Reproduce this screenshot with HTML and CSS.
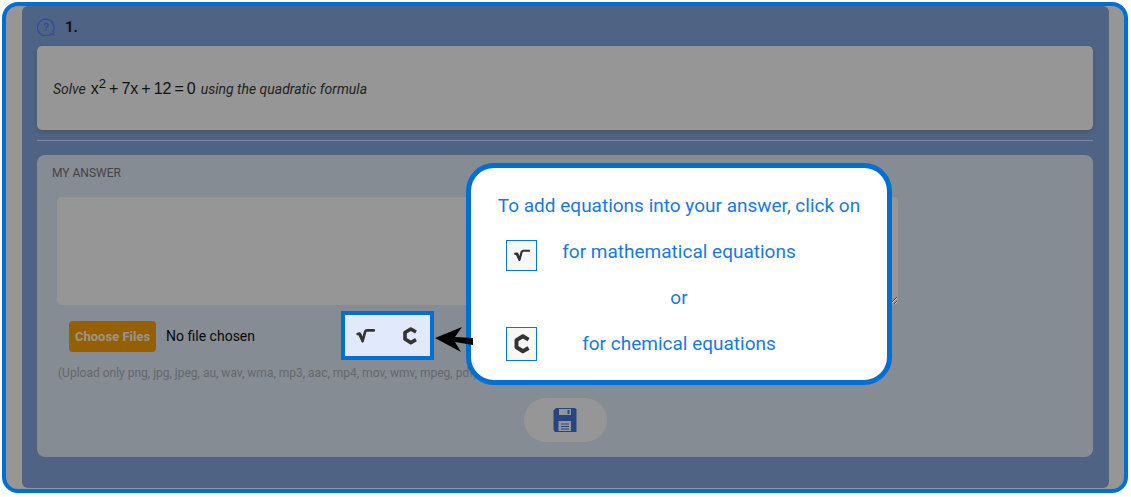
FILE: index.html
```
<!DOCTYPE html>
<html lang="en">
<head>
<meta charset="utf-8">
<title>Question 1</title>
<link rel="stylesheet" href="styles.css">
</head>
<body>
<svg class="symbols" aria-hidden="true">
  <symbol id="root" viewBox="0 0 20 20"><path d="M2.600 8L4.600 7.600L7.600 15L10.200 5.600Q10.700 4.400 12 4.400H19" fill="none" stroke="currentColor" stroke-width="2.600" stroke-linecap="round" stroke-linejoin="round"/><path d="M3.500 8L7.600 16L9.500 9L7.500 12L5.500 7.500Z" fill="currentColor" stroke="currentColor" stroke-width="1.200" stroke-linejoin="round"/></symbol>
  <symbol id="hex" viewBox="0 0 20 20"><path d="M16 6L10.800 3L5 6.500V13L10.800 16.600L16 13.600" fill="none" stroke="currentColor" stroke-width="3.600" stroke-linejoin="round"/></symbol>
</svg>
<main class="frame">
  <section class="panel">
    <header class="question-head">
      <svg class="help" viewBox="0 0 18 18" aria-hidden="true">
        <path d="M14.4 15.6A8.3 8.3 0 1 1 16.2 13.2Q15.8 15 17 17Q15.6 17.2 14.4 15.6Z" fill="none" stroke="currentColor" stroke-width="1.2" stroke-linejoin="round"/>
        <path d="M7.2 7.3A1.9 1.9 0 1 1 9.9 9Q9.1 9.4 9.1 10.3" fill="none" stroke="currentColor" stroke-width="1.4"/>
        <circle cx="9.1" cy="12.2" r=".9" fill="currentColor"/>
      </svg>
      <h1 class="number">1.</h1>
    </header>
    <div class="question">
      <em>Solve</em>
      <span class="equation"><span>x<sup>2</sup></span><span>+</span><span>7x</span><span>+</span><span>12</span><span>=</span><span>0</span></span>
      <em>using the quadratic formula</em>
    </div>
    <hr class="rule">
    <form class="answer">
      <label class="answer-label" for="answer">MY ANSWER</label>
      <textarea class="answer-text" id="answer"></textarea>
      <div class="attach">
        <input class="file" type="file" multiple aria-label="Choose files">
        <div class="tools">
          <button class="tool" type="button" aria-label="Mathematical equation"><svg class="icon"><use href="#root"/></svg></button>
          <button class="tool" type="button" aria-label="Chemical equation"><svg class="icon"><use href="#hex"/></svg></button>
          <div class="tip" role="dialog" aria-label="Adding equations">
            <p class="tip-text">To add equations into your answer, click on</p>
            <div class="tip-row">
              <span class="key"><svg class="icon-small"><use href="#root"/></svg></span>
              <p class="tip-text">for mathematical equations</p>
            </div>
            <p class="tip-text">or</p>
            <div class="tip-row">
              <span class="key key-tall"><svg class="icon-large"><use href="#hex"/></svg></span>
              <p class="tip-text">for chemical equations</p>
            </div>
          </div>
          <svg class="arrow" viewBox="0 0 40 28" aria-hidden="true"><path d="M1 13L28 2L21 12L39 13V20L21 17L27 27Z" fill="#000"/></svg>
        </div>
      </div>
      <p class="hint">(Upload only png, jpg, jpeg, au, wav, wma, mp3, aac, mp4, mov, wmv, mpeg, pdf)</p>
      <button class="save" type="submit" aria-label="Save">
        <svg class="disk" viewBox="0 0 24 26" aria-hidden="true">
          <path d="M3 1H22L23.5 2.5V25H2L.5 23V3.5Z" fill="#264581"/>
          <path d="M6 2H18V8H6ZM5.500 14H18V24H5.500Z" fill="#969696"/>
          <path d="M15.500 3V7" stroke="#264581" stroke-width="2"/>
          <path d="M8 17H16M8 19.500H16M8 22H16" stroke="#264581" stroke-width="1"/>
        </svg>
      </button>
    </form>
  </section>
</main>
</body>
</html>
```
FILE: styles.css
```
* { box-sizing: border-box; }
body { margin: 0; padding: 2px 3px 4px 2px; background: #fff; font-family: Roboto, sans-serif; }
p, h1 { margin: 0; }
.symbols { position: absolute; width: 0; height: 0; }
.frame { padding: 0 15px 1px 16px; border: 4px solid #006fd3; border-radius: 16px; background: #969696; }
.panel { padding: 10px 16px 31px 15px; border-radius: 6px; background: #4f6384; }
.question-head { display: flex; align-items: center; gap: 10px; height: 30px; padding-bottom: 9px; }
.help { width: 18px; height: 18px; color: #2e509c; }
.number { font-size: 15px; line-height: 20px; font-weight: 700; color: #111; }
.question { display: flex; align-items: center; height: 84px; padding: 2px 16px 0; gap: 5px; border-radius: 5px; background: #969696; box-shadow: 0 2px 4px rgba(0, 0, 0, .15); font-size: 14px; color: #222; }
.equation { display: flex; gap: 3px; font: 16px/20px "Liberation Sans", sans-serif; color: #111; }
.equation sup { font-size: 13px; line-height: 1px; }
.rule { height: 1px; margin: 10px 0 14px; border: 0; background: #7b889d; }
.answer { display: flex; flex-direction: column; align-items: flex-start; padding: 10px 15px 15px; border-radius: 8px; background: #858c94; }
.answer-label { font-size: 12px; line-height: 16px; color: #444; }
.answer-text { width: 82%; height: 108px; margin: 16px 0 0 5px; padding: 8px; border: 0; border-radius: 5px; background: #969696; font: 14px Roboto, sans-serif; }
.attach { display: flex; align-items: center; gap: 10px; margin-top: 6px; padding-left: 17px; }
.file { width: 262px; padding-top: 1px; font: 14px/16px Roboto, sans-serif; color: #080808; }
.file::file-selector-button { height: 31px; margin: 0 10px 0 0; padding: 0 6px; border: 0; border-radius: 4px; background: #966000; color: #969696; font: 700 13px Roboto, sans-serif; }
.tools { position: relative; display: flex; align-items: center; justify-content: space-between; width: 93px; height: 49px; padding: 0 10px; border: 4px solid #006fd3; background: #e1eafc; }
.tool { display: grid; padding: 0; border: 0; background: none; color: #333; }
.icon { width: 20px; height: 20px; color: #333; }
.icon-small { width: 17px; height: 17px; color: #333; }
.icon-large { width: 22px; height: 22px; color: #333; }
.tip { position: absolute; left: 121px; top: -152px; display: flex; flex-direction: column; align-items: center; gap: 22px; width: 426px; height: 222px; padding: 26px 0 0; border: 5px solid #006fd3; border-radius: 28px; background: #fff; }
.tip-text { font-size: 19px; line-height: 24px; text-align: center; color: #1a7ad9; }
.tip-row { display: grid; grid-template-columns: 31px 1fr 31px; align-self: stretch; height: 24px; padding: 0 35px; }
.key { display: grid; place-items: center; width: 31px; height: 31px; border: 1px solid #0878d8; background: #f7f7f7; }
.key-tall { height: 34px; margin-top: -5px; }
.arrow { position: absolute; left: 89px; top: 10px; width: 40px; height: 28px; }
.hint { margin: 5px 0 0 6px; font-size: 12px; line-height: 16px; color: #65686b; }
.save { display: grid; place-items: center; align-self: center; width: 83px; height: 44px; margin-top: 17px; padding: 0; border: 0; border-radius: 22px; background: #969696; }
.disk { width: 24px; height: 26px; }
```
